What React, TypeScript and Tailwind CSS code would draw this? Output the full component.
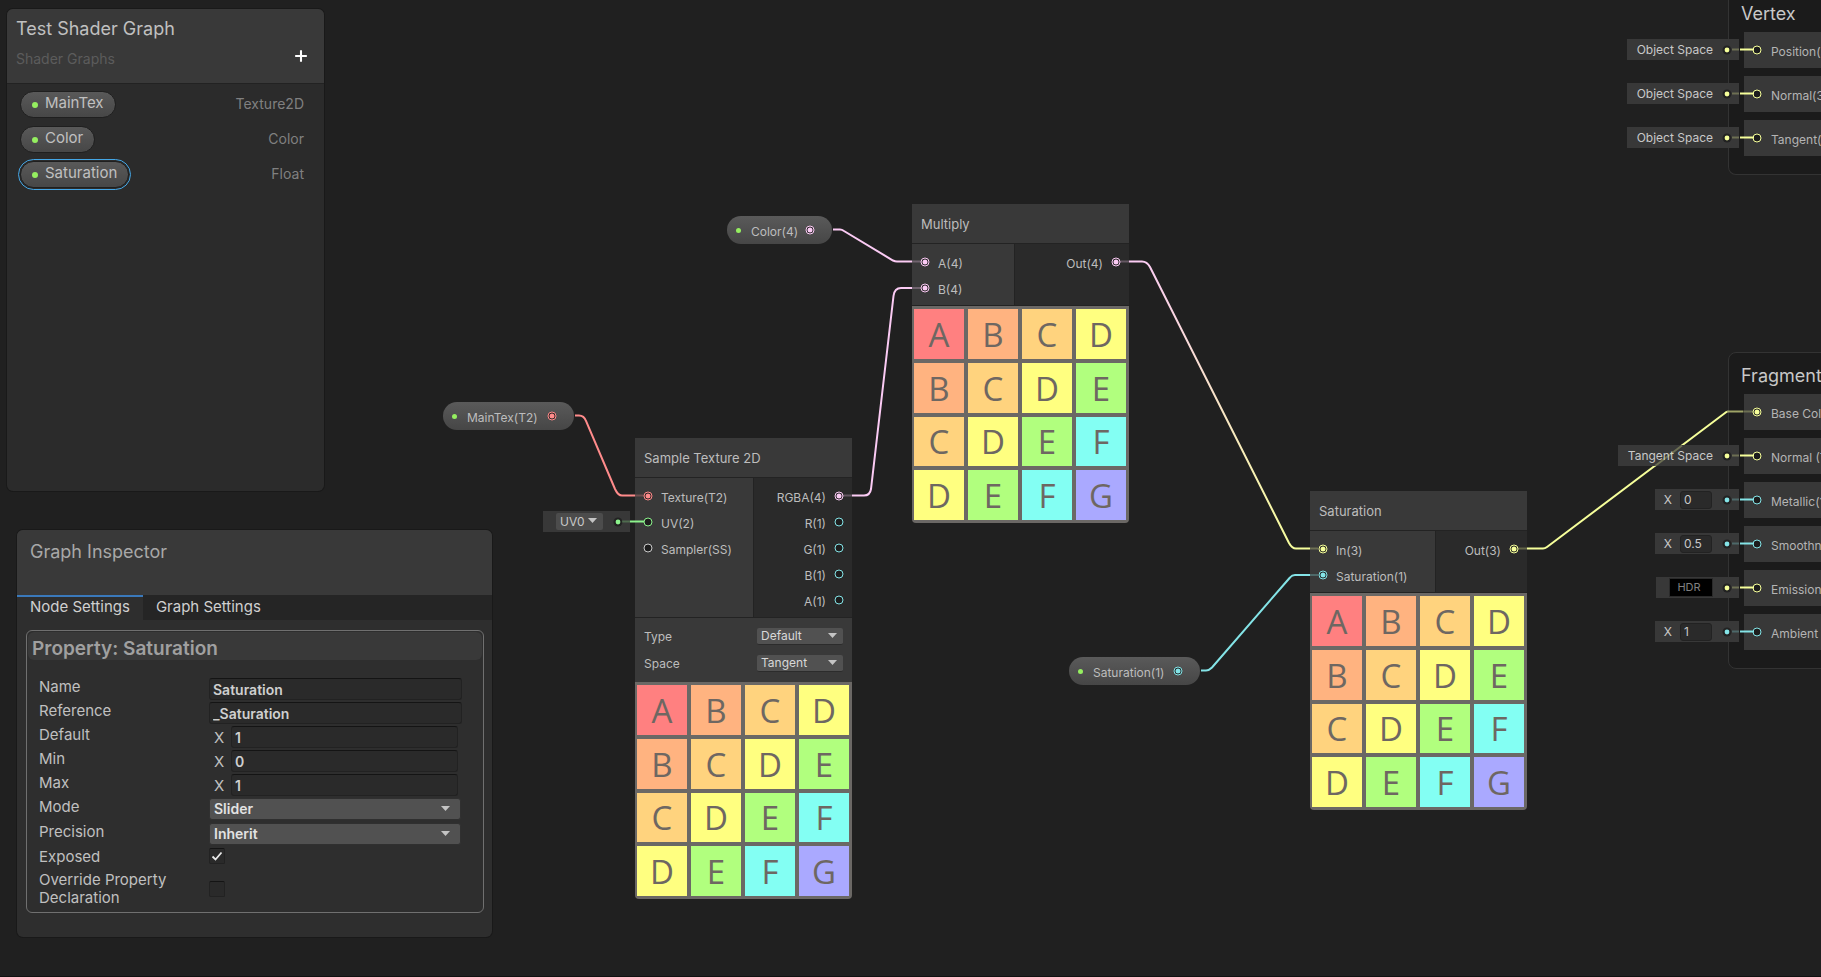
import React from "react";
import { Plus } from "lucide-react";

const PINK = "#fbcbf4";
const CYAN = "#84e4e7";
const YELLOW = "#f6ff9a";
const RED = "#ff8b8b";
const GREEN = "#8cf28c";
const GREY = "#c9c9c9";

type PortSpec = { label: string; color: string; on?: boolean };

function Port({ color, on }: { color: string; on?: boolean }) {
  return (
    <svg width="10" height="10" viewBox="0 0 10 10" className="shrink-0" aria-hidden="true">
      <circle cx="5" cy="5" r="4" fill="#1d1d1d" stroke={color} strokeWidth="1" />
      {on && <circle cx="5" cy="5" r="2.500" fill={color} />}
    </svg>
  );
}

function Caret({ className }: { className: string }) {
  return (
    <svg width="9" height="5" viewBox="0 0 9 5" className={className} aria-hidden="true">
      <path d="M0 0H9L4.5 5Z" fill="#c4c4c4" />
    </svg>
  );
}

const TILE_COLORS: Record<string, string> = {
  A: "bg-[#ff8080]",
  B: "bg-[#ffb380]",
  C: "bg-[#ffd37e]",
  D: "bg-[#ffff80]",
  E: "bg-[#b1ff7e]",
  F: "bg-[#83fff3]",
  G: "bg-[#aaa9ff]",
};

function Preview() {
  return (
    <div className="grid h-[217px] grid-cols-4 grid-rows-4 gap-1 rounded-b bg-[#6b6865] py-[3px] pr-[3px] pl-[2px] font-['Open_Sans',sans-serif] text-[33px] leading-none text-[#6e6762]">
      {"ABCDBCDECDEFDEFG".split("").map((letter, i) => (
        <div key={i} className={`flex items-center justify-center pt-px ${TILE_COLORS[letter]}`}>
          {letter}
        </div>
      ))}
    </div>
  );
}

function PortRow({ label, color, on, out }: PortSpec & { out?: boolean }) {
  return (
    <div className={`flex h-[26px] items-center gap-2 ${out ? "flex-row-reverse" : ""}`}>
      <Port color={color} on={on} />
      <span className="pt-1">{label}</span>
    </div>
  );
}

function GraphNode(props: {
  title: string;
  place: string;
  inputWidth: string;
  inputs: PortSpec[];
  outputs: PortSpec[];
  children?: React.ReactNode;
}) {
  return (
    <section className={`absolute w-[217px] text-xs text-[#bdbdbd] ${props.place}`}>
      <h2 className="flex h-[39px] items-center bg-[#393939] px-[9px] pt-[2px] text-[13px]">{props.title}</h2>
      <div className="flex border-y border-[#232323]">
        <div className={`border-r border-[#232323] bg-[#393939] pt-[5px] pb-1 pl-2 ${props.inputWidth}`}>
          {props.inputs.map((p) => (
            <PortRow key={p.label} {...p} />
          ))}
        </div>
        <div className="flex-1 bg-[#2a2a2a] pt-[5px] pr-2 pb-1">
          {props.outputs.map((p) => (
            <PortRow key={p.label} {...p} out />
          ))}
        </div>
      </div>
      {props.children}
      <Preview />
    </section>
  );
}

function NodeSelect({ label, options }: { label: string; options: string[] }) {
  return (
    <label className="flex h-[27px] items-center justify-between">
      {label}
      <span className="relative">
        <select className="block h-[17px] w-[86px] appearance-none rounded-[2px] border-b border-[#2c2c2c] bg-[#515151] pl-1 text-xs leading-4 text-[#d8d8d8]">
          {options.map((o) => (
            <option key={o}>{o}</option>
          ))}
        </select>
        <Caret className="pointer-events-none absolute top-[5px] right-[6px]" />
      </span>
    </label>
  );
}

function PropertyPill({ label, color, place }: { label: string; color: string; place: string }) {
  return (
    <div
      className={`absolute flex h-7 items-center rounded-full bg-linear-to-b from-[#5a5a5a] to-[#464646] pl-[9px] text-xs text-[#bdbdbd] ${place}`}
    >
      <i className="size-[5px] rounded-full bg-[#95ef60]" />
      <span className="flex-1 pt-1 pl-[10px]">{label}</span>
      <span className="pr-[17px]">
        <Port color={color} on />
      </span>
    </div>
  );
}

function Slot({ color, children, width }: { color: string; children: React.ReactNode; width?: string }) {
  return (
    <div className={`flex h-[21px] items-center justify-end bg-[#383838] pr-[7px] text-xs text-[#c8c8c8] ${width ?? ""}`}>
      {children}
      <svg width="10" height="10" viewBox="0 0 10 10" className="shrink-0" aria-hidden="true">
        <circle cx="5" cy="5" r="4.5" fill="#222222" />
        <circle cx="5" cy="5" r="2.4" fill={color} />
      </svg>
    </div>
  );
}

function SpaceSlot({ label }: { label: string }) {
  return (
    <Slot color={YELLOW}>
      <span className="pr-[9px] pl-[10px]">{label}</span>
    </Slot>
  );
}

function NumberSlot({ value, name }: { value: string; name: string }) {
  return (
    <Slot color={CYAN} width="w-[84px]">
      <label className="flex items-center gap-2 pr-[10px]">
        X
        <input
          aria-label={name}
          defaultValue={value}
          className="h-[18px] w-8 rounded-[3px] border border-[#222222] bg-[#2a2a2a] px-[3px] text-xs"
        />
      </label>
    </Slot>
  );
}

function Context({ title, place, ports }: { title: string; place: string; ports: PortSpec[] }) {
  return (
    <section className={`absolute left-[1728px] w-80 rounded-lg border border-[#333333] bg-[#1b1b1b] px-[15px] pb-[18px] ${place}`}>
      <h2 className="-ml-[3px] pb-[6px] text-lg leading-6 text-[#c8c8c8]">{title}</h2>
      <div className="flex flex-col gap-2">
        {ports.map((p) => (
          <div key={p.label} className="flex h-9 items-center gap-[9px] bg-[#383838] pl-2 text-xs whitespace-nowrap text-[#b4b4b4]">
            <Port color={p.color} on={p.on} />
            <span className="pt-1">{p.label}</span>
          </div>
        ))}
      </div>
    </section>
  );
}

function Wires() {
  return (
    <svg className="pointer-events-none absolute inset-0 h-full w-full" fill="none" strokeWidth="2" aria-hidden="true">
      <defs>
        <linearGradient id="pinkToYellow" gradientUnits="userSpaceOnUse" x1="1130" y1="262" x2="1310" y2="549">
          <stop offset="0" stopColor={PINK} />
          <stop offset="1" stopColor={YELLOW} />
        </linearGradient>
      </defs>
      <path d="M833 229.500H840Q842 229.500 844 231L893 260.500Q895 261.500 897 261.500H912" stroke={PINK} />
      <path d="M575 415.500H579Q584 415.500 586 421L615 489Q618 495.500 622 495.500H635" stroke={RED} />
      <path d="M852 495.500H864Q870 495.500 871 489L893.500 296Q894.500 288 901 288H912" stroke={PINK} />
      <path d="M1129 261.500H1142Q1147 261.500 1150 267L1289 543Q1292 548.500 1296 548.500H1310" stroke="url(#pinkToYellow)" />
      <path d="M1201 670.500H1206Q1209 670.500 1212 667.500L1290 577.500Q1292 575 1295 575H1310" stroke={CYAN} />
      <path d="M1527 548.500H1543Q1545 548.500 1547 547L1727 411.500" stroke={YELLOW} />
    </svg>
  );
}

const STUBS: [string, string][] = [
  ["M912 261.500H921", PINK],
  ["M912 288H921", PINK],
  ["M635 495.500H644", RED],
  ["M843 495.500H852", PINK],
  ["M1120 261.500H1129", PINK],
  ["M1310 548.500H1318", YELLOW],
  ["M1310 575H1318", CYAN],
  ["M1518 548.500H1527", YELLOW],
  ["M622 521.500H630", GREEN],
  ["M1655 466L1682 445.500", YELLOW],
];

function PortLinks() {
  const slots: [number, string][] = [
    [49, YELLOW],
    [93, YELLOW],
    [137, YELLOW],
    [455, YELLOW],
    [499, CYAN],
    [543, CYAN],
    [587, YELLOW],
    [631, CYAN],
  ];
  return (
    <svg className="pointer-events-none absolute inset-0 h-full w-full" fill="none" strokeWidth="2" aria-hidden="true">
      <g opacity="0.28">
        {STUBS.map(([d, c]) => (
          <path key={d} d={d} stroke={c} />
        ))}
        {slots.map(([y, c]) => (
          <path key={y} d={`M1732 ${y + 0.5}H1739`} stroke={c} />
        ))}
      </g>
      <path d="M1727 411.500H1743" stroke={YELLOW} opacity="0.6" />
      <path d="M1743 411.500H1753" stroke={YELLOW} opacity="0.28" />
      <path d="M630 521.500H644" stroke={GREEN} />
      {slots.map(([y, c]) => (
        <path key={y} d={`M1740 ${y + 0.5}H1754`} stroke={c} />
      ))}
    </svg>
  );
}

function Blackboard() {
  const items = [
    { name: "MainTex", type: "Texture2D", selected: false },
    { name: "Color", type: "Color", selected: false },
    { name: "Saturation", type: "Float", selected: true },
  ];
  return (
    <section className="absolute top-[9px] left-[7px] h-[482px] w-[317px] overflow-hidden rounded-md bg-[#2b2b2b] shadow-[0_0_0_1px_#191919]">
      <header className="flex h-[75px] justify-between border-b border-[#222222] bg-[#393939] pt-2 pr-[13px] pl-[9px]">
        <div>
          <h1 className="text-lg leading-6 text-[#c0c0c0]">Test Shader Graph</h1>
          <p className="pt-2 text-sm leading-5 text-[#5c5c5c]">Shader Graphs</p>
        </div>
        <button aria-label="Add property" className="self-start pt-[29px] text-white">
          <Plus size={20} strokeWidth={2.5} strokeLinecap="butt" />
        </button>
      </header>
      <ul className="flex flex-col pt-[3px] pr-5 pl-[11px]">
        {items.map((it) => (
          <li key={it.name} className="flex h-[35px] items-center justify-between">
            <span className={`rounded-full border p-px ${it.selected ? "border-[#44a6e5]" : "border-transparent"}`}>
              <span className="flex h-[27px] items-center rounded-full border border-[#1f1f1f] bg-linear-to-b from-[#595959] to-[#474747] px-[11px] text-[15px] text-[#c0c0c0]">
                <i className="size-[6px] rounded-full bg-[#95ef60]" />
                <span className="pb-0.5 pl-[7px]">{it.name}</span>
              </span>
            </span>
            <span className="pb-0.5 text-sm text-[#808080]">{it.type}</span>
          </li>
        ))}
      </ul>
    </section>
  );
}

const FIELD =
  "h-[22px] rounded-[3px] border border-[#222222] border-t-[#141414] bg-[#2a2a2a] px-[3px] text-sm font-semibold text-[#cfcfcf]";

function InspectorRow({ id, label, children }: { id: string; label: string; children: React.ReactNode }) {
  return (
    <div className="flex h-6">
      <label htmlFor={id} className="w-[170px] leading-[18px]">
        {label}
      </label>
      {children}
    </div>
  );
}

function InspectorSelect({ id, label, options }: { id: string; label: string; options: string[] }) {
  return (
    <div className="flex h-[25px]">
      <label htmlFor={id} className="w-[170px] leading-[18px]">
        {label}
      </label>
      <span className="relative">
        <select
          id={id}
          className="block h-[22px] w-[252px] appearance-none rounded-[3px] border border-[#303030] bg-[#515151] pl-1 text-sm leading-4 font-semibold text-[#e2e2e2]"
        >
          {options.map((o) => (
            <option key={o}>{o}</option>
          ))}
        </select>
        <Caret className="pointer-events-none absolute top-2 right-[11px]" />
      </span>
    </div>
  );
}

function CheckBox({ id, checked }: { id: string; checked?: boolean }) {
  return (
    <span className="relative size-4">
      <input
        id={id}
        type="checkbox"
        defaultChecked={checked}
        className="peer block size-4 appearance-none rounded-[2px] border border-[#222222] border-t-[#141414] bg-[#2a2a2a]"
      />
      <svg
        className="pointer-events-none absolute top-0 left-0 hidden peer-checked:block"
        width="16"
        height="16"
        viewBox="0 0 16 16"
        fill="none"
        aria-hidden="true"
      >
        <path d="M3.500 8.500L6.500 11.500L12.500 4.500" stroke="#e8e8e8" strokeWidth="1.800" />
      </svg>
    </span>
  );
}

function Inspector() {
  return (
    <section className="absolute top-[530px] left-[17px] h-[407px] w-[475px] overflow-hidden rounded-md bg-[#2e2e2e] text-[15px] text-[#c0c0c0] shadow-[0_0_0_1px_#191919]">
      <header className="h-[65px] bg-[#393939] pt-[10px] pl-[13px]">
        <h1 className="text-lg leading-6 text-[#a8a8a8]">Graph Inspector</h1>
      </header>
      <div role="tablist" className="flex h-[25px] bg-[#252525] text-[#d0d0d0]">
        <button role="tab" aria-selected="true" className="border-t-2 border-[#3a79bb] bg-[#2e2e2e] px-[13px] pb-[3px] leading-5">
          Node Settings
        </button>
        <button role="tab" aria-selected="false" className="border-t-2 border-transparent px-[13px] pb-[3px] leading-5">
          Graph Settings
        </button>
      </div>
      <div className="mt-[10px] mr-2 ml-[9px] rounded-md border border-[#707070] p-px pb-[5px]">
        <h2 className="h-7 rounded-md bg-[#393939] pl-1 text-[19px] leading-[33px] font-semibold text-[#a0a0a0]">
          Property: Saturation
        </h2>
        <div className="pt-[18px] pl-[11px]">
          <InspectorRow id="name" label="Name">
            <input id="name" defaultValue="Saturation" className={`w-[253px] ${FIELD}`} />
          </InspectorRow>
          <InspectorRow id="reference" label="Reference">
            <input id="reference" defaultValue="_Saturation" className={`w-[253px] ${FIELD}`} />
          </InspectorRow>
          {[
            ["Default", "1"],
            ["Min", "0"],
            ["Max", "1"],
          ].map(([label, value]) => (
            <InspectorRow key={label} id={label} label={label}>
              <span className="w-[22px] pl-[5px] leading-6">X</span>
              <input id={label} defaultValue={value} className={`w-[227px] ${FIELD}`} />
            </InspectorRow>
          ))}
          <InspectorSelect id="mode" label="Mode" options={["Slider", "Default"]} />
          <InspectorSelect id="precision" label="Precision" options={["Inherit", "Single", "Half"]} />
          <div className="flex h-5">
            <label htmlFor="exposed" className="w-[170px] leading-[18px]">
              Exposed
            </label>
            <CheckBox id="exposed" checked />
          </div>
          <div className="flex items-center pt-[3px]">
            <label htmlFor="override" className="w-[170px] pr-4 leading-[18px]">
              Override Property Declaration
            </label>
            <CheckBox id="override" />
          </div>
        </div>
      </div>
    </section>
  );
}

export default function App() {
  return (
    <main className="relative h-screen w-full overflow-hidden border-b border-[#111111] bg-[#202020] font-['Inter',sans-serif]">
      <Context
        title="Vertex"
        place="-top-[1px] rounded-t-none border-t-0 pt-[3px]"
        ports={[
          { label: "Position(3)", color: YELLOW },
          { label: "Normal(3)", color: YELLOW },
          { label: "Tangent(3)", color: YELLOW },
        ]}
      />
      <Context
        title="Fragment"
        place="top-[352px] pt-[11px]"
        ports={[
          { label: "Base Color(3)", color: YELLOW, on: true },
          { label: "Normal (Tangent Space)(3)", color: YELLOW },
          { label: "Metallic(1)", color: CYAN },
          { label: "Smoothness(1)", color: CYAN },
          { label: "Emission(3)", color: YELLOW },
          { label: "Ambient Occlusion(1)", color: CYAN },
        ]}
      />
      <Wires />

      <div className="absolute top-[39px] left-[1528px] flex w-[211px] flex-col items-end gap-[23px]">
        <SpaceSlot label="Object Space" />
        <SpaceSlot label="Object Space" />
        <SpaceSlot label="Object Space" />
      </div>
      <div className="absolute top-[445px] left-[1528px] flex w-[211px] flex-col items-end gap-[23px]">
        <SpaceSlot label="Tangent Space" />
        <NumberSlot name="Metallic" value="0" />
        <NumberSlot name="Smoothness" value="0.5" />
        <Slot color={YELLOW} width="w-[83px]">
          <button className="mr-[9px] h-[19px] w-11 border border-[#2a2a2a] bg-black pr-1 text-[11px] text-[#808080]">HDR</button>
        </Slot>
        <NumberSlot name="Ambient Occlusion" value="1" />
      </div>

      <PropertyPill label="Color(4)" color={PINK} place="top-[216px] left-[727px] w-[105px]" />
      <PropertyPill label="MainTex(T2)" color={RED} place="top-[402px] left-[443px] w-[131px]" />
      <PropertyPill label="Saturation(1)" color={CYAN} place="top-[657px] left-[1069px] w-[131px]" />

      <div className="absolute top-[511px] left-[543px]">
        <Slot color={GREEN} width="w-[87px]">
          <label className="relative mr-[10px]">
            <select aria-label="UV channel" className="block h-[17px] w-[47px] appearance-none rounded-[2px] bg-[#4c4c4c] pl-1 text-xs leading-4">
              <option>UV0</option>
              <option>UV1</option>
            </select>
            <Caret className="pointer-events-none absolute top-[5px] right-[6px]" />
          </label>
        </Slot>
      </div>

      <GraphNode
        title="Sample Texture 2D"
        place="top-[438px] left-[635px]"
        inputWidth="w-[119px]"
        inputs={[
          { label: "Texture(T2)", color: RED, on: true },
          { label: "UV(2)", color: GREEN },
          { label: "Sampler(SS)", color: GREY },
        ]}
        outputs={[
          { label: "RGBA(4)", color: PINK, on: true },
          { label: "R(1)", color: CYAN },
          { label: "G(1)", color: CYAN },
          { label: "B(1)", color: CYAN },
          { label: "A(1)", color: CYAN },
        ]}
      >
        <div className="bg-[#393939] px-[9px] py-[5px]">
          <NodeSelect label="Type" options={["Default", "Normal"]} />
          <NodeSelect label="Space" options={["Tangent", "Object"]} />
        </div>
      </GraphNode>
      <GraphNode
        title="Multiply"
        place="top-[204px] left-[912px]"
        inputWidth="w-[103px]"
        inputs={[
          { label: "A(4)", color: PINK, on: true },
          { label: "B(4)", color: PINK, on: true },
        ]}
        outputs={[{ label: "Out(4)", color: PINK, on: true }]}
      />
      <GraphNode
        title="Saturation"
        place="top-[491px] left-[1310px]"
        inputWidth="w-[126px]"
        inputs={[
          { label: "In(3)", color: YELLOW, on: true },
          { label: "Saturation(1)", color: CYAN, on: true },
        ]}
        outputs={[{ label: "Out(3)", color: YELLOW, on: true }]}
      />
      <PortLinks />

      <Blackboard />
      <Inspector />
    </main>
  );
}
